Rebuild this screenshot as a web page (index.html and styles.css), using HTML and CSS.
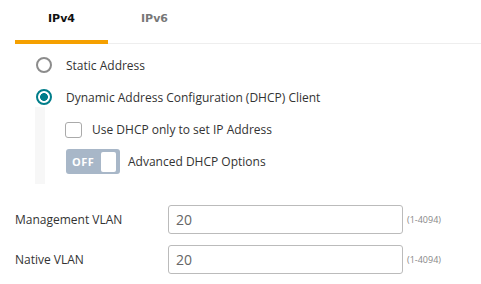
FILE: index.html
```html
<!DOCTYPE html>
<html lang="en">
<head>
    <meta charset="UTF-8">
    <title>IP Settings</title>
    <link rel="stylesheet" href="styles.css">
</head>
<body>
    <div class="tabs">
        <div class="tab active">IPv4</div>
        <div class="tab">IPv6</div>
    </div>

    <div class="options">
        <label class="radio-row">
            <span class="radio"></span>
            <span>Static Address</span>
        </label>
        <label class="radio-row">
            <span class="radio checked"></span>
            <span>Dynamic Address Configuration (DHCP) Client</span>
        </label>

        <div class="sub-options">
            <label class="check-row">
                <span class="checkbox"></span>
                <span>Use DHCP only to set IP Address</span>
            </label>
            <div class="toggle-row">
                <span class="toggle">
                    <span class="toggle-text">OFF</span>
                    <span class="toggle-knob"></span>
                </span>
                <span>Advanced DHCP Options</span>
            </div>
        </div>
    </div>

    <div class="fields">
        <div class="field-row">
            <label class="field-label">Management VLAN</label>
            <input type="text" class="field-input" value="20">
            <span class="field-hint">(1-4094)</span>
        </div>
        <div class="field-row">
            <label class="field-label">Native VLAN</label>
            <input type="text" class="field-input" value="20">
            <span class="field-hint">(1-4094)</span>
        </div>
    </div>
</body>
</html>
```

FILE: styles.css
```css
body {
    margin: 0;
    font-family: "Open Sans", "Noto Sans", sans-serif;
    font-size: 12px;
    color: #333;
    background-color: #fff;
}

.tabs {
    display: flex;
    margin-left: 15px;
    border-bottom: 1px solid #eee;
}

.tab {
    width: 93px;
    height: 40px;
    line-height: 38px;
    text-align: center;
    font-family: "DejaVu Sans", sans-serif;
    font-weight: bold;
    font-size: 11px;
    color: #777;
    margin-bottom: -1px;
    border-bottom: 4px solid transparent;
}

.tab.active {
    color: #111;
    border-bottom-color: #f5a000;
}

.options {
    padding: 13px 0 0 36px;
}

.radio-row {
    display: flex;
    align-items: center;
    gap: 14px;
    height: 16px;
    margin-bottom: 16px;
}

.radio {
    width: 16px;
    height: 16px;
    box-sizing: border-box;
    border: 2px solid #8c8c8c;
    border-radius: 50%;
}

.radio.checked {
    border-color: #007d8a;
    background: radial-gradient(circle, #007d8a 0, #007d8a 3.6px, #fff 4.2px);
}

.sub-options {
    margin-top: -14px;
    margin-left: -1px;
    padding: 14px 0 10px 30px;
    background: linear-gradient(to right, #f7f7f7 10px, #fff 10px);
    display: flex;
    flex-direction: column;
    gap: 11px;
}

.check-row,
.toggle-row {
    display: flex;
    align-items: center;
    gap: 10px;
}

.checkbox {
    width: 17px;
    height: 16px;
    box-sizing: border-box;
    border: 1px solid #aaa;
    border-radius: 3px;
}

.toggle-row {
    margin-left: 1px;
    gap: 8px;
}

.toggle {
    width: 54px;
    height: 25px;
    border-radius: 3px;
    background-color: #a8b7c8;
    display: flex;
    align-items: center;
    justify-content: space-between;
    padding: 0 4px 0 6px;
    box-sizing: border-box;
}

.toggle-text {
    color: #fff;
    font-weight: bold;
    font-size: 11px;
    letter-spacing: 0.5px;
}

.toggle-knob {
    width: 15px;
    height: 20px;
    background-color: #fff;
    border-radius: 2px;
}

.fields {
    padding: 21px 0 0 15px;
    display: flex;
    flex-direction: column;
    gap: 11px;
}

.field-row {
    display: flex;
    align-items: center;
}

.field-label {
    width: 153px;
    font-size: 12px;
}

.field-input {
    width: 235px;
    height: 29px;
    box-sizing: border-box;
    border: 1px solid #bbb;
    border-radius: 3px;
    padding: 0 7px;
    font-family: "Open Sans", sans-serif;
    font-size: 14px;
    color: #666;
}

.field-hint {
    margin-left: 4px;
    font-size: 9px;
    color: #888;
}
```
